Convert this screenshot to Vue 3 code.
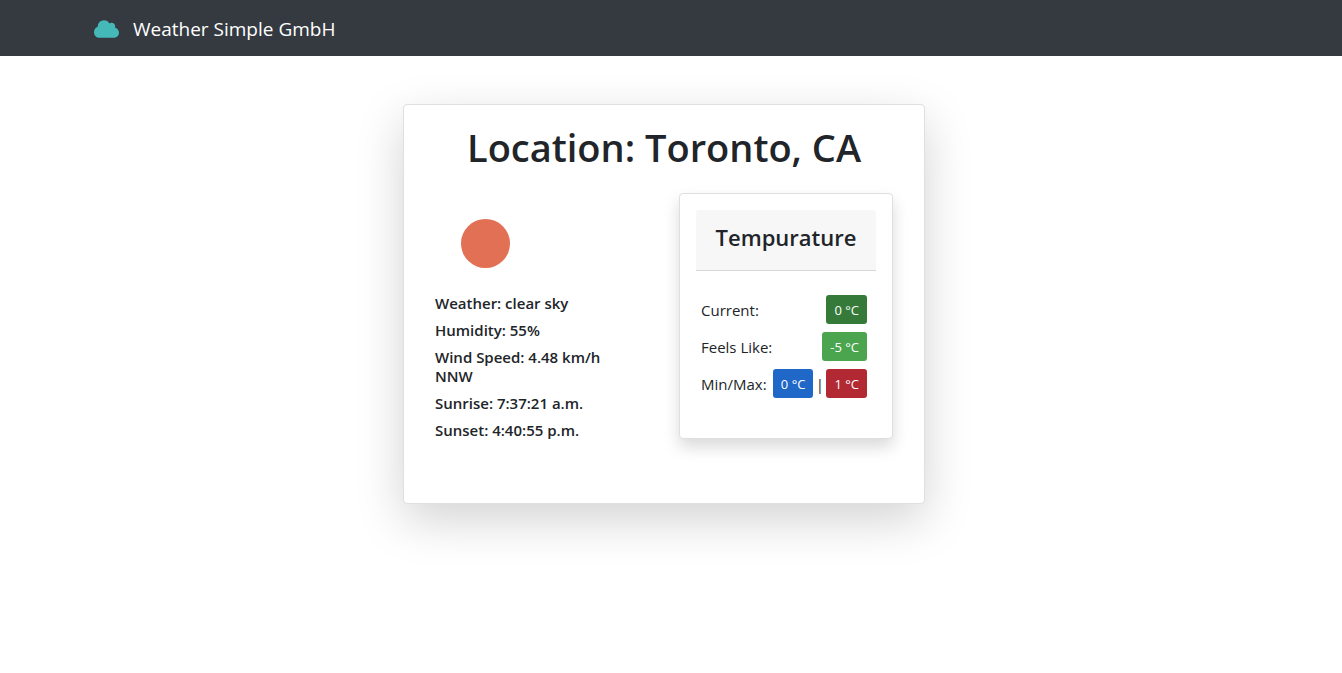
<script setup>
const details = [
  'Weather: clear sky',
  'Humidity: 55%',
  'Wind Speed: 4.48 km/h NNW',
  'Sunrise: 7:37:21 a.m.',
  'Sunset: 4:40:55 p.m.',
]
</script>

<template>
  <nav class="navbar">
    <a class="brand" href="#">
      <svg class="cloud" viewBox="0 0 640 512" aria-hidden="true">
        <path d="M537.6 226.600c4.100-10.700 6.400-22.400 6.400-34.600 0-53-43-96-96-96-19.700 0-38.100 6-53.300 16.200C367 64.200 315.300 32 256 32c-88.400 0-160 71.600-160 160 0 2.700.1 5.400.2 8.100C40.200 219.800 0 273.200 0 336c0 79.500 64.500 144 144 144h368c70.700 0 128-57.300 128-128 0-61.900-44-113.600-102.400-125.400z" />
      </svg>
      <span>Weather Simple GmbH</span>
    </a>
  </nav>
  <main class="page">
    <section class="card">
      <h1>Location: Toronto, CA</h1>
      <div class="columns">
        <div class="summary">
          <svg class="sun" viewBox="0 0 49 49" role="img" aria-label="Clear sky">
            <circle cx="24.500" cy="24.500" r="24.500" />
          </svg>
          <p v-for="line in details" :key="line">{{ line }}</p>
        </div>
        <section class="temperature">
          <h2>Tempurature</h2>
          <dl>
            <div class="row">
              <dt>Current:</dt>
              <dd><span class="badge current">0 °C</span></dd>
            </div>
            <div class="row">
              <dt>Feels Like:</dt>
              <dd><span class="badge feels">-5 °C</span></dd>
            </div>
            <div class="row">
              <dt>Min/Max:</dt>
              <dd>
                <span class="badge min">0 °C</span>
                <span class="divider">|</span>
                <span class="badge max">1 °C</span>
              </dd>
            </div>
          </dl>
        </section>
      </div>
    </section>
  </main>
</template>

<style>
body {
  margin: 0;
  background: #fff;
}
</style>

<style scoped>
.navbar,
.page {
  box-sizing: border-box;
  font-family: "Segoe UI", "Open Sans", "Noto Sans", sans-serif;
  color: #212529;
}
.navbar {
  display: flex;
  align-items: center;
  height: 56px;
  padding: 2px 94px 0;
  background: #343a40;
}
.brand {
  display: flex;
  align-items: center;
  gap: 14px;
  color: #fff;
  font-size: 19px;
  line-height: 30px;
  text-decoration: none;
  white-space: nowrap;
}
.cloud {
  width: 25px;
  height: 20px;
  fill: #45b8b8;
}
.page {
  display: flex;
  justify-content: center;
  padding: 48px 14px 96px 0;
}
.card {
  box-sizing: border-box;
  width: 522px;
  padding: 16px 31px 55px;
  border: 1px solid #dfdfdf;
  border-radius: 4px;
  background: #fff;
  box-shadow: 0 16px 48px rgba(0, 0, 0, 0.175);
}
h1 {
  margin: 0 0 20px;
  font-size: 38px;
  font-weight: 600;
  line-height: 52px;
  text-align: center;
  white-space: nowrap;
}
.columns {
  display: flex;
  align-items: flex-start;
  justify-content: space-between;
}
.summary {
  width: 184px;
  padding-top: 26px;
}
.sun {
  display: block;
  width: 49px;
  height: 49px;
  margin: 0 0 26px 26px;
  fill: #e17055;
}
.summary p {
  margin: 0 0 8px;
  font-size: 15px;
  font-weight: 600;
  line-height: 19px;
}
.temperature {
  box-sizing: border-box;
  width: 214px;
  padding: 16px 16px 40px;
  border: 1px solid #dfdfdf;
  border-radius: 4px;
  background: #fff;
  box-shadow: 0 8px 16px rgba(0, 0, 0, 0.15);
}
h2 {
  margin: 0 0 24px;
  padding: 11px 0 17px;
  border-bottom: 1px solid #d8d8d8;
  border-radius: 3px 3px 0 0;
  background: #f7f7f7;
  font-size: 22px;
  font-weight: 600;
  line-height: 32px;
  text-align: center;
}
dl {
  display: grid;
  gap: 8px;
  margin: 0;
  padding: 0 9px 0 5px;
}
.row {
  display: flex;
  align-items: center;
  justify-content: space-between;
  white-space: nowrap;
}
dt {
  font-size: 15px;
  line-height: 24px;
}
dd {
  display: flex;
  align-items: center;
  margin: 0;
}
.badge {
  padding: 5px 8px 3px;
  border-radius: 3px;
  color: #fff;
  font-size: 13px;
  line-height: 21px;
}
.divider {
  width: 13px;
  font-size: 15px;
  line-height: 24px;
  text-align: center;
}
.current {
  background: #357a38;
}
.feels {
  background: #4aa54e;
}
.min {
  background: #1f68c8;
}
.max {
  background: #b22833;
}
</style>
